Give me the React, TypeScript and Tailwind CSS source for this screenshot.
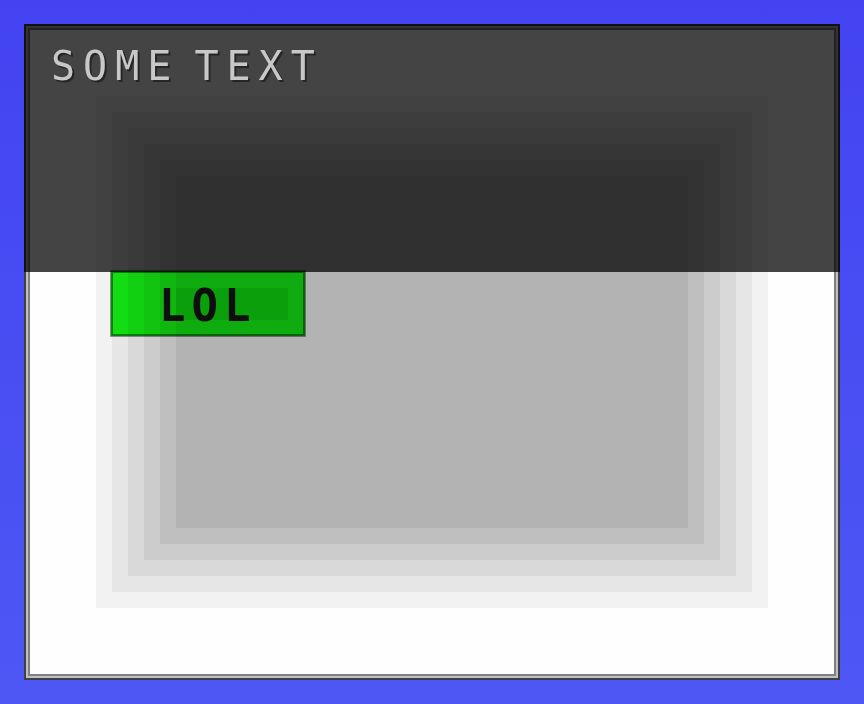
import React from "react";

export default function App() {
  return (
    <div className="w-[864px] h-[704px] bg-linear-to-b from-[#4343f1] to-[#4e57f4] pt-[24px] pl-[24px] overflow-hidden">
      <div className="relative w-[816px] h-[656px] border-2 border-[#404040]">
        <div className="w-full h-full border-2 border-[#c0c0c0]">
          <div className="w-full h-full border-2 border-[#808080] bg-[#fefefe] p-[66px]">
            <div className="w-full h-full bg-[#f2f2f2] p-4">
              <div className="w-full h-full bg-[#e6e6e6] p-4">
                <div className="w-full h-full bg-[#d9d9d9] p-4">
                  <div className="w-full h-full bg-[#cccccc] p-4">
                    <div className="w-full h-full bg-[#bfbfbf] p-4">
                      <div className="w-full h-full bg-[#b3b3b3]" />
                    </div>
                  </div>
                </div>
              </div>
            </div>
          </div>
        </div>

        {/* header overlay */}
        <div className="absolute -top-[2px] -left-[2px] w-[816px] h-[248px] bg-black/[0.733] pl-[27px] pt-[22px]">
          <div
            className="text-[40px] leading-none tracking-[8px] [word-spacing:-17px] text-[#c8c8c8] [text-shadow:2px_2px_0_#262626]"
            style={{ fontFamily: '"DejaVu Sans Mono", monospace' }}
          >
            SOME TEXT
          </div>
        </div>

        {/* LOL button */}
        <div className="absolute left-[84px] top-[244px] w-[196px] h-[67px] border border-black/40">
          <div className="relative w-full h-full border-2 border-[#0b8c0b] bg-[#13f513] mix-blend-multiply pl-[46px] pt-[11px]">
            <div className="absolute left-[63px] top-[15px] w-[112px] h-[32px] bg-black/[0.07]" />
            <div
              className="relative text-[44px] leading-none font-bold tracking-[6px] text-[#141414]"
              style={{ fontFamily: '"DejaVu Sans Mono", monospace' }}
            >
              LOL
            </div>
          </div>
        </div>
      </div>
    </div>
  );
}
